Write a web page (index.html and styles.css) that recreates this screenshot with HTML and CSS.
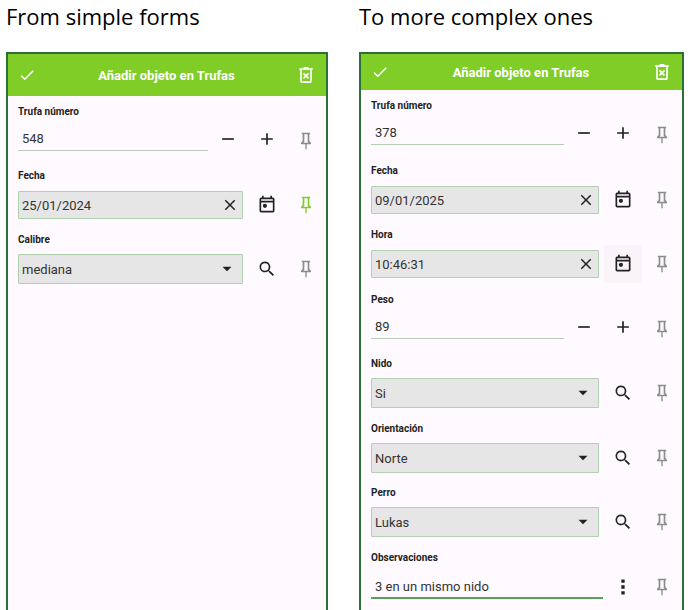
FILE: index.html
```
<!DOCTYPE html>
<html lang="en">
<head>
<meta charset="UTF-8">
<meta name="viewport" content="width=device-width, initial-scale=1.0">
<title>Forms</title>
<link rel="stylesheet" href="styles.css">
</head>
<body>
    <!-- shared icons -->
    <svg class="sprite" aria-hidden="true">
        <symbol id="check" viewBox="0 0 24 24"><path d="M21 7 9 19l-5.500-5.500 1.400-1.400L9 16.200 19.600 5.600z"/></symbol>
        <symbol id="trash" viewBox="0 0 24 24"><path d="M6 6v13.500q0 1 1 1h10q1 0 1-1V6M4 5h16M9 3.500h6M9 10l6 6M15 10l-6 6" fill="none" stroke="currentColor" stroke-width="2"/></symbol>
        <symbol id="minus" viewBox="0 0 24 24"><path d="M19 13H5v-2h14z"/></symbol>
        <symbol id="plus" viewBox="0 0 24 24"><path d="M19 13h-6v6h-2v-6H5v-2h6V5h2v6h6z"/></symbol>
        <symbol id="pin" viewBox="0 0 24 24"><path d="M16 12V4h1V2H7v2h1v8l-2 2v2h5.200v6h1.600v-6H18v-2zm-7.200 2 1.200-1.200V4h4v8.800l1.200 1.200z"/></symbol>
        <symbol id="close" viewBox="0 0 24 24"><path d="M19 6.400 17.600 5 12 10.600 6.400 5 5 6.400l5.600 5.600L5 17.600 6.400 19l5.600-5.600 5.600 5.600 1.400-1.400-5.600-5.600z"/></symbol>
        <symbol id="calendar" viewBox="0 0 24 24"><path d="M19 3h-1V1h-2v2H8V1H6v2H5a2 2 0 0 0-2 2v14a2 2 0 0 0 2 2h14a2 2 0 0 0 2-2V5a2 2 0 0 0-2-2zm0 16H5V9h14zm0-12H5V5h14z"/><circle cx="9.500" cy="13" r="2.500"/></symbol>
        <symbol id="search" viewBox="0 0 24 24"><path d="M9.500 3a6.500 6.500 0 0 1 4.900 10.700l.3.300h.8l5 5-1.500 1.500-5-5v-.8l-.3-.3A6.500 6.500 0 1 1 9.500 3m0 2a4.500 4.500 0 1 0 0 9 4.500 4.500 0 0 0 0-9"/></symbol>
        <symbol id="dots" viewBox="0 0 24 24"><path d="M10 3h4v4h-4zM10 10h4v4h-4zM10 17h4v4h-4z"/></symbol>
        <symbol id="caret" viewBox="0 0 24 24"><path d="m6 9 6 6 6-6z"/></symbol>
    </svg>

    <main class="columns">
        <section class="column">
            <h1>From simple forms</h1>
            <form class="panel">
                <header class="bar bar-tall">
                    <button type="button" class="icon-btn" aria-label="Guardar"><svg class="icon-small"><use href="#check"/></svg></button>
                    <h2>Añadir objeto en Trufas</h2>
                    <button type="button" class="icon-btn" aria-label="Eliminar"><svg><use href="#trash"/></svg></button>
                </header>
                <div class="fields">
                    <div class="field">
                        <label for="trufa1">Trufa número</label>
                        <div class="row">
                            <div class="stepper">
                                <input type="number" class="line-input" id="trufa1" value="548">
                                <button type="button" class="icon-btn" aria-label="Menos"><svg><use href="#minus"/></svg></button>
                                <button type="button" class="icon-btn" aria-label="Más"><svg><use href="#plus"/></svg></button>
                            </div>
                            <button type="button" class="icon-btn pin" aria-label="Fijar"><svg><use href="#pin"/></svg></button>
                        </div>
                    </div>
                    <div class="field">
                        <label for="fecha1">Fecha</label>
                        <div class="row">
                            <div class="box">
                                <input type="text" id="fecha1" value="25/01/2024">
                                <button type="button" class="clear" aria-label="Borrar"><svg class="icon-small"><use href="#close"/></svg></button>
                            </div>
                            <button type="button" class="icon-btn" aria-label="Calendario"><svg><use href="#calendar"/></svg></button>
                            <button type="button" class="icon-btn pin pinned" aria-label="Fijar"><svg><use href="#pin"/></svg></button>
                        </div>
                    </div>
                    <div class="field">
                        <label for="calibre1">Calibre</label>
                        <div class="row">
                            <div class="box box-select">
                                <select id="calibre1"><option>mediana</option></select>
                                <svg class="caret"><use href="#caret"/></svg>
                            </div>
                            <button type="button" class="icon-btn" aria-label="Buscar"><svg><use href="#search"/></svg></button>
                            <button type="button" class="icon-btn pin" aria-label="Fijar"><svg><use href="#pin"/></svg></button>
                        </div>
                    </div>
                </div>
            </form>
        </section>

        <section class="column">
            <h1>To more complex ones</h1>
            <form class="panel">
                <header class="bar">
                    <button type="button" class="icon-btn" aria-label="Guardar"><svg class="icon-small"><use href="#check"/></svg></button>
                    <h2>Añadir objeto en Trufas</h2>
                    <button type="button" class="icon-btn" aria-label="Eliminar"><svg><use href="#trash"/></svg></button>
                </header>
                <div class="fields fields-long">
                    <div class="field">
                        <label for="trufa2">Trufa número</label>
                        <div class="row">
                            <div class="stepper">
                                <input type="number" class="line-input" id="trufa2" value="378">
                                <button type="button" class="icon-btn" aria-label="Menos"><svg><use href="#minus"/></svg></button>
                                <button type="button" class="icon-btn" aria-label="Más"><svg><use href="#plus"/></svg></button>
                            </div>
                            <button type="button" class="icon-btn pin" aria-label="Fijar"><svg><use href="#pin"/></svg></button>
                        </div>
                    </div>
                    <div class="field">
                        <label for="fecha2">Fecha</label>
                        <div class="row">
                            <div class="box">
                                <input type="text" id="fecha2" value="09/01/2025">
                                <button type="button" class="clear" aria-label="Borrar"><svg class="icon-small"><use href="#close"/></svg></button>
                            </div>
                            <button type="button" class="icon-btn" aria-label="Calendario"><svg><use href="#calendar"/></svg></button>
                            <button type="button" class="icon-btn pin" aria-label="Fijar"><svg><use href="#pin"/></svg></button>
                        </div>
                    </div>
                    <div class="field">
                        <label for="hora2">Hora</label>
                        <div class="row">
                            <div class="box">
                                <input type="text" id="hora2" value="10:46:31">
                                <button type="button" class="clear" aria-label="Borrar"><svg class="icon-small"><use href="#close"/></svg></button>
                            </div>
                            <button type="button" class="icon-btn active" aria-label="Reloj"><svg><use href="#calendar"/></svg></button>
                            <button type="button" class="icon-btn pin" aria-label="Fijar"><svg><use href="#pin"/></svg></button>
                        </div>
                    </div>
                    <div class="field">
                        <label for="peso2">Peso</label>
                        <div class="row">
                            <div class="stepper">
                                <input type="number" class="line-input" id="peso2" value="89">
                                <button type="button" class="icon-btn" aria-label="Menos"><svg><use href="#minus"/></svg></button>
                                <button type="button" class="icon-btn" aria-label="Más"><svg><use href="#plus"/></svg></button>
                            </div>
                            <button type="button" class="icon-btn pin" aria-label="Fijar"><svg><use href="#pin"/></svg></button>
                        </div>
                    </div>
                    <div class="field">
                        <label for="nido2">Nido</label>
                        <div class="row">
                            <div class="box box-select">
                                <select id="nido2"><option>Si</option></select>
                                <svg class="caret"><use href="#caret"/></svg>
                            </div>
                            <button type="button" class="icon-btn" aria-label="Buscar"><svg><use href="#search"/></svg></button>
                            <button type="button" class="icon-btn pin" aria-label="Fijar"><svg><use href="#pin"/></svg></button>
                        </div>
                    </div>
                    <div class="field">
                        <label for="orientacion2">Orientación</label>
                        <div class="row">
                            <div class="box box-select">
                                <select id="orientacion2"><option>Norte</option></select>
                                <svg class="caret"><use href="#caret"/></svg>
                            </div>
                            <button type="button" class="icon-btn" aria-label="Buscar"><svg><use href="#search"/></svg></button>
                            <button type="button" class="icon-btn pin" aria-label="Fijar"><svg><use href="#pin"/></svg></button>
                        </div>
                    </div>
                    <div class="field">
                        <label for="perro2">Perro</label>
                        <div class="row">
                            <div class="box box-select">
                                <select id="perro2"><option>Lukas</option></select>
                                <svg class="caret"><use href="#caret"/></svg>
                            </div>
                            <button type="button" class="icon-btn" aria-label="Buscar"><svg><use href="#search"/></svg></button>
                            <button type="button" class="icon-btn pin" aria-label="Fijar"><svg><use href="#pin"/></svg></button>
                        </div>
                    </div>
                    <div class="field">
                        <label for="obs2">Observaciones</label>
                        <div class="row">
                            <input type="text" class="line-input focused" id="obs2" value="3 en un mismo nido">
                            <button type="button" class="icon-btn" aria-label="Más opciones"><svg><use href="#dots"/></svg></button>
                            <button type="button" class="icon-btn pin" aria-label="Fijar"><svg><use href="#pin"/></svg></button>
                        </div>
                    </div>
                </div>
            </form>
        </section>
    </main>
</body>
</html>
```
FILE: styles.css
```
* {
    box-sizing: border-box;
}

body {
    margin: 0;
    background-color: #fff;
    font-family: Roboto, Arial, sans-serif;
    color: #222;
}

.sprite {
    position: absolute;
    width: 0;
    height: 0;
}

.columns {
    display: grid;
    grid-template-columns: 322fr 325fr;
    gap: 31px;
    min-height: 100vh;
    padding: 0 7px 0 6px;
}

.column {
    display: flex;
    flex-direction: column;
    min-width: 0;
}

h1 {
    margin: 0;
    padding-top: 2px;
    height: 52px;
    font-family: "Open Sans", "Noto Sans", sans-serif;
    font-size: 22px;
    font-weight: 400;
    line-height: 28px;
    color: #000;
    white-space: nowrap;
}

.panel {
    flex: 1;
    border: 2px solid #2b7036;
    border-bottom: none;
    background-color: #fefaff;
}

/* green title bar */
.bar {
    display: flex;
    align-items: center;
    height: 36px;
    padding-right: 1px;
    background-color: #80cd28;
    color: #fff;
}

.bar-tall {
    height: 42px;
}

h2 {
    flex: 1;
    margin: 0;
    font-size: 13px;
    font-weight: 700;
    text-align: center;
}

.fields {
    padding: 8px 1px 0 10px;
}

.field {
    padding-bottom: 8px;
}

.fields-long .field:nth-child(odd) {
    padding-bottom: 9px;
}

.field:last-child {
    padding-bottom: 0;
}

label {
    display: block;
    margin-bottom: 2px;
    font-size: 10px;
    font-weight: 700;
    line-height: 16px;
}

.row {
    display: flex;
    align-items: center;
    gap: 1px;
    height: 38px;
}

.stepper {
    display: flex;
    flex: 1;
    align-items: center;
    gap: 1px;
    min-width: 0;
    padding-bottom: 5px;
}

input,
select {
    flex: 1;
    min-width: 0;
    width: 100%;
    height: 26px;
    margin: 0;
    padding: 0 0 0 3px;
    border: none;
    outline: none;
    appearance: none;
    background: none;
    font-family: inherit;
    font-size: 13px;
    color: #333;
}

input[type="number"] {
    appearance: textfield;
}

input[type="number"]::-webkit-inner-spin-button {
    display: none;
}

.line-input {
    height: 24px;
    padding-left: 4px;
    border-bottom: 1px solid #b5ceb2;
}

.line-input.focused {
    border-bottom: 2px solid #5c9f5c;
}

.box {
    position: relative;
    display: flex;
    flex: 1;
    align-items: center;
    min-width: 0;
    height: 28px;
    margin-right: 4px;
    border: 1px solid #b0d0b0;
    border-radius: 1px;
    background-color: #e6e6e6;
}

.box-select {
    height: 30px;
}

button {
    display: flex;
    align-items: center;
    justify-content: center;
    flex: none;
    padding: 0;
    border: none;
    background: none;
    color: inherit;
    cursor: pointer;
}

.icon-btn {
    width: 38px;
    height: 38px;
}

.bar .icon-btn {
    height: 36px;
}

.icon-btn.active {
    background-color: #f8f4f8;
}

.pin {
    color: #8d898e;
}

.pin.pinned {
    color: #80cd28;
}

.clear {
    width: 24px;
    height: 26px;
}

svg {
    width: 20px;
    height: 20px;
    fill: currentColor;
}

.icon-small {
    width: 18px;
    height: 18px;
}

.caret {
    position: absolute;
    right: 6px;
    width: 18px;
    height: 18px;
    pointer-events: none;
}
```
